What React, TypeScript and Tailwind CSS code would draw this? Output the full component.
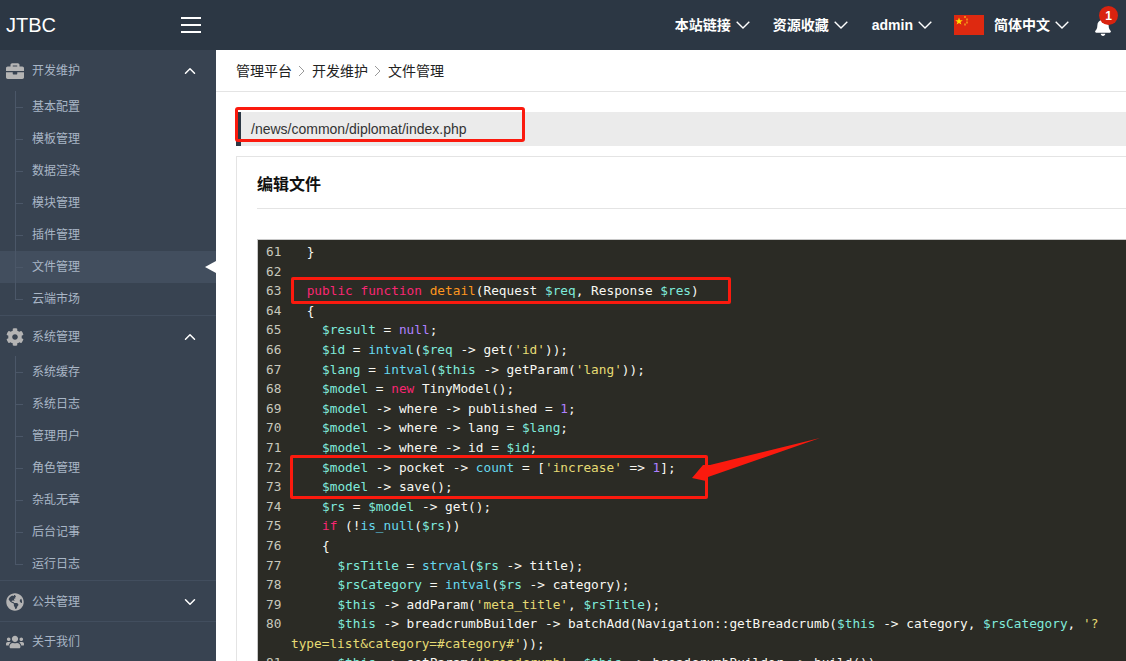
import React from 'react';
import { ChevronDown, ChevronUp } from 'lucide-react';
import { FaBell, FaBriefcase, FaCog, FaGlobeAmericas, FaUsers } from 'react-icons/fa';

const cjk = "font-['Liberation_Sans','Noto_Sans_CJK_SC',sans-serif]";

const groups = [
  { label: '开发维护', icon: FaBriefcase, open: true, items: ['基本配置', '模板管理', '数据渲染', '模块管理', '插件管理', '文件管理', '云端市场'] },
  { label: '系统管理', icon: FaCog, open: true, items: ['系统缓存', '系统日志', '管理用户', '角色管理', '杂乱无章', '后台记事', '运行日志'] },
  { label: '公共管理', icon: FaGlobeAmericas, open: false, items: [] },
  { label: '关于我们', icon: FaUsers, open: false, items: [], noArrow: true },
];

const P = 'text-[#f92672]';
const O = 'text-[#fd971f]';
const C = 'text-[#66d9ef]';
const V = 'text-[#7feadb]';
const N = 'text-[#ae81ff]';
const S = 'text-[#e6db74]';

type Seg = string | [string, string];

const lines: { n: string; segs: Seg[]; wrap?: Seg[] }[] = [
  { n: '61', segs: [' }'] },
  { n: '62', segs: [''] },
  { n: '63', segs: [' ', ['public function', P], ' ', ['detail', O], '(Request ', ['$req', V], ', Response ', ['$res', V], ')'] },
  { n: '64', segs: [' {'] },
  { n: '65', segs: ['   ', ['$result', V], ' = ', ['null', N], ';'] },
  { n: '66', segs: ['   ', ['$id', V], ' = ', ['intval', C], '(', ['$req', V], ' -> get(', ["'id'", S], '));'] },
  { n: '67', segs: ['   ', ['$lang', V], ' = ', ['intval', C], '(', ['$this', V], ' -> getParam(', ["'lang'", S], '));'] },
  { n: '68', segs: ['   ', ['$model', V], ' = ', ['new', P], ' TinyModel();'] },
  { n: '69', segs: ['   ', ['$model', V], ' -> where -> published = ', ['1', N], ';'] },
  { n: '70', segs: ['   ', ['$model', V], ' -> where -> lang = ', ['$lang', V], ';'] },
  { n: '71', segs: ['   ', ['$model', V], ' -> where -> id = ', ['$id', V], ';'] },
  { n: '72', segs: ['   ', ['$model', V], ' -> pocket -> ', ['count', C], ' = [', ["'increase'", S], ' => ', ['1', N], '];'] },
  { n: '73', segs: ['   ', ['$model', V], ' -> save();'] },
  { n: '74', segs: ['   ', ['$rs', V], ' = ', ['$model', V], ' -> get();'] },
  { n: '75', segs: ['   ', ['if', P], ' (!', ['is_null', C], '(', ['$rs', V], '))'] },
  { n: '76', segs: ['   {'] },
  { n: '77', segs: ['     ', ['$rsTitle', V], ' = ', ['strval', C], '(', ['$rs', V], ' -> title);'] },
  { n: '78', segs: ['     ', ['$rsCategory', V], ' = ', ['intval', C], '(', ['$rs', V], ' -> category);'] },
  { n: '79', segs: ['     ', ['$this', V], ' -> addParam(', ["'meta_title'", S], ', ', ['$rsTitle', V], ');'] },
  {
    n: '80',
    segs: ['     ', ['$this', V], ' -> breadcrumbBuilder -> batchAdd(Navigation::getBreadcrumb(', ['$this', V], ' -> category, ', ['$rsCategory', V], ', ', ["'?", S]],
    wrap: [["type=list&category=#category#'", S], '));'],
  },
  { n: '81', segs: ['     ', ['$this', V], ' -> setParam(', ["'breadcrumb'", S], ', ', ['$this', V], ' -> breadcrumbBuilder -> build());'] },
];

function Code({ segs }: { segs: Seg[] }) {
  return (
    <>
      {segs.map((s, i) =>
        typeof s === 'string' ? <span key={i}>{s}</span> : <span key={i} className={s[1]}>{s[0]}</span>
      )}
    </>
  );
}

function NavGroup({ group, index }: { group: typeof groups[0]; index: number }) {
  const Icon = group.icon;
  return (
    <div className="border-b border-[#424e5e] last:border-b-0">
      <div className={`flex items-center h-[40px] pl-[6px] pr-[17px] ${index === 1 || index === 2 ? 'pt-[2px]' : ''}`}>
        <Icon className="w-[18px] h-[18px] text-[#b4b4b4]" />
        <span className="ml-[8px] text-[12px] text-[#a9b6c6]">{group.label}</span>
        {!group.noArrow && (group.open
          ? <ChevronUp className="ml-auto w-[18px] h-[18px] text-white" strokeWidth={2} />
          : <ChevronDown className="ml-auto w-[18px] h-[18px] text-white" strokeWidth={2} />)}
      </div>
      {group.items.length > 0 && (
        <ul>
          {group.items.map((item, i) => (
            <li key={item} className={`relative flex items-center h-[32px] pl-[32px] text-[12px] text-[#a9b6c6] ${item === '文件管理' ? 'bg-[#424e5e]' : ''}`}>
              <span className={`absolute left-[15px] top-0 w-px bg-[#4b5768] ${i === group.items.length - 1 ? 'h-[16px]' : 'h-[32px]'}`} />
              <span className="absolute left-[15px] top-[16px] w-[8px] h-px bg-[#4b5768]" />
              {item}
              {item === '文件管理' && (
                <span className="absolute right-0 top-[10px] border-y-[6px] border-y-transparent border-r-[11px] border-r-white" />
              )}
            </li>
          ))}
        </ul>
      )}
    </div>
  );
}

function Caret() {
  return (
    <svg className="ml-[5px] shrink-0" width="14" height="8" viewBox="0 0 14 8" fill="none">
      <path d="M0.7 0.7 L7 7 L13.3 0.7" stroke="white" strokeWidth="1.4" />
    </svg>
  );
}

function TopLink({ label }: { label: string }) {
  return (
    <span className="flex items-center text-[14px] font-bold text-white">
      {label}
      <Caret />
    </span>
  );
}

function Crumb() {
  return (
    <svg className="mx-[6px] shrink-0" width="8" height="12" viewBox="0 0 8 12" fill="none">
      <path d="M1 1 L6 6 L1 11" stroke="#999" strokeWidth="1" />
    </svg>
  );
}

export default function App() {
  return (
    <div className={`w-[1126px] h-[661px] overflow-hidden flex flex-col bg-white ${cjk}`}>
      <header className="h-[50px] shrink-0 flex items-center bg-[#2c3744]">
        <div className="w-[216px] shrink-0 flex items-center justify-between pl-[6px] pr-[15px]">
          <span className="text-[20px] text-white">JTBC</span>
          <svg width="20" height="16" viewBox="0 0 20 16" fill="white">
            <rect x="0" y="0" width="20" height="2" />
            <rect x="0" y="7" width="20" height="2" />
            <rect x="0" y="14" width="20" height="2" />
          </svg>
        </div>
        <div className="ml-auto flex items-center pr-[14px]">
          <TopLink label="本站链接" />
          <span className="ml-[23px]"><TopLink label="资源收藏" /></span>
          <span className="ml-[24px]"><TopLink label="admin" /></span>
          <svg className="ml-[22px]" width="30" height="20" viewBox="0 0 30 20">
            <rect width="30" height="20" fill="#de2910" />
            <path d="M5 2.5 L6 5.2 L8.8 5.2 L6.5 6.9 L7.4 9.6 L5 8 L2.6 9.6 L3.5 6.9 L1.2 5.2 L4 5.2 Z" fill="#ffde00" />
            <rect x="10" y="1" width="2" height="2" fill="#f0801a" />
            <rect x="12" y="3.5" width="2" height="2" fill="#f0801a" />
            <rect x="12" y="6.5" width="2" height="2" fill="#f0801a" />
            <rect x="10" y="8.5" width="2" height="2" fill="#f0801a" />
          </svg>
          <span className="ml-[10px]"><TopLink label="简体中文" /></span>
          <span className="ml-[25px] relative block w-[18px] h-[18px] mt-[4px]">
            <FaBell className="w-[18px] h-[18px] text-white" />
            <span className="absolute left-[5px] top-[-12px] w-[19px] h-[19px] rounded-full bg-[#d9230f] text-white text-[12px] font-bold flex items-center justify-center">1</span>
          </span>
        </div>
      </header>
      <div className="flex flex-1 min-h-0">
        <aside className="w-[216px] shrink-0 bg-[#384351] pt-[1px]">
          {groups.map((g, i) => <NavGroup key={g.label} group={g} index={i} />)}
        </aside>
        <main className="flex-1 min-w-0 overflow-hidden">
          <div className="h-[42px] border-b border-[#e4e4e4] flex items-center pl-[20px] pt-[1px] text-[14px] text-[#222]">
            <span>管理平台</span>
            <Crumb />
            <span>开发维护</span>
            <Crumb />
            <span>文件管理</span>
          </div>
          <div className="pl-[20px]">
            <div className="relative mt-[20px] h-[34px] flex items-center bg-[#ebebeb] border-l-[5px] border-[#2c3744] pl-[10px] text-[14px] text-[#333]">
              /news/common/diplomat/index.php
              <span className="absolute left-[-6px] top-[-5px] w-[290px] h-[35px] border-[3px] border-[#fb1a0e] rounded-[3px]" />
            </div>
            <div className="mt-[10px] border border-r-0 border-[#e4e4e4] pl-[20px] h-[600px]">
              <h2 className="h-[52px] pt-[5px] flex items-center text-[16px] font-bold text-[#111] border-b border-[#e4e4e4]">编辑文件</h2>
              <div className="relative mt-[30px] border-t border-l border-[#c8c8c8] bg-[#2b2b25] text-[#f8f8f2] font-['DejaVu_Sans_Mono','Liberation_Mono',monospace] text-[12.77px] leading-[19.6px] pt-[2px] whitespace-pre overflow-hidden">
                {lines.map((l) => (
                  <React.Fragment key={l.n}>
                    <div className="flex">
                      <span className="w-[33px] pl-[8px] shrink-0 text-[#c9c9bd]">{l.n}</span>
                      <span className="pl-[8px]"><Code segs={l.segs} /></span>
                    </div>
                    {l.wrap && <div className="pl-[33px]"><Code segs={l.wrap} /></div>}
                  </React.Fragment>
                ))}
                <span className="absolute left-[33px] top-[37px] w-[440px] h-[27px] border-[3px] border-[#fb1a0e] rounded-[2px]" />
                <span className="absolute left-[32px] top-[215px] w-[418px] h-[44px] border-[3px] border-[#fb1a0e] rounded-[2px]" />
                <svg className="absolute left-[422px] top-[190px]" width="150" height="70" viewBox="0 0 150 70">
                  <path d="M140 8 L30 35 L23 35 L12 48 L26 51 L28 47 Z" fill="#fb1a0e" />
                </svg>
              </div>
            </div>
          </div>
        </main>
      </div>
    </div>
  );
}
